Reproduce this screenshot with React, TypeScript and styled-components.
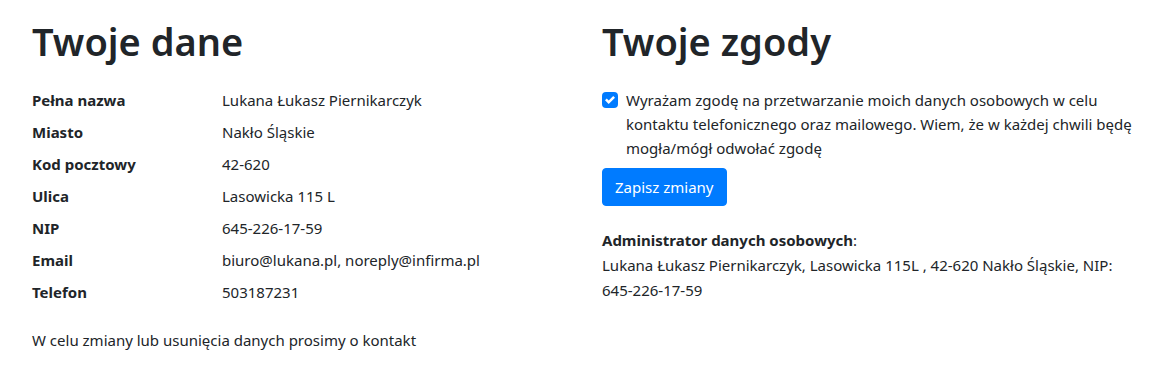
import React from "react";
import styled, { createGlobalStyle } from "styled-components";

const Global = createGlobalStyle`
  html, body { margin: 0; padding: 0; background: #fff; }
  body {
    font-family: "Noto Sans", "Open Sans", sans-serif;
    font-size: 15px;
    line-height: 24px;
    color: #212529;
  }
  * { box-sizing: border-box; }
`;

const Page = styled.div`
  display: grid;
  grid-template-columns: 570px 540px;
  padding: 17px 32px 0 32px;
`;

const Column = styled.section`
  display: flex;
  flex-direction: column;
`;

const Title = styled.h1`
  margin: 0 0 19px 0;
  font-size: 38px;
  line-height: 48px;
  font-weight: 600;
  color: #212529;
`;

const Table = styled.div`
  display: grid;
  grid-template-columns: 190px 1fr;
  grid-auto-rows: 32px;
  align-items: center;
  margin-bottom: 20px;
`;

const Label = styled.div`
  font-weight: 700;
`;

const Value = styled.div``;

const Note = styled.p`
  margin: 0;
`;

const Consent = styled.label`
  display: flex;
  gap: 8px;
  width: 540px;
  margin-top: 4px;
  align-items: flex-start;
`;

const ConsentText = styled.span`
  white-space: nowrap;
`;

const Box = styled.span`
  flex: none;
  width: 16px;
  height: 16px;
  margin-top: 4px;
  border-radius: 4px;
  background: #007bff;
  display: flex;
  align-items: center;
  justify-content: center;
`;

const Button = styled.button`
  align-self: flex-start;
  margin-top: 8px;
  padding: 6px 12px;
  font-family: inherit;
  font-size: 15px;
  line-height: 24px;
  color: #fff;
  background: #007bff;
  border: 1px solid #007bff;
  border-radius: 4px;
`;

const Admin = styled.p`
  margin: 22px 0 0 0;
  width: 520px;
  line-height: 25px;
`;

const rows: [string, string][] = [
  ["Pełna nazwa", "Lukana Łukasz Piernikarczyk"],
  ["Miasto", "Nakło Śląskie"],
  ["Kod pocztowy", "42-620"],
  ["Ulica", "Lasowicka 115 L"],
  ["NIP", "645-226-17-59"],
  ["Email", "biuro@lukana.pl, noreply@infirma.pl"],
  ["Telefon", "503187231"],
];

export default function App() {
  return (
    <>
      <Global />
      <Page>
        <Column>
          <Title>Twoje dane</Title>
          <Table>
            {rows.map(([k, v]) => (
              <React.Fragment key={k}>
                <Label>{k}</Label>
                <Value>{v}</Value>
              </React.Fragment>
            ))}
          </Table>
          <Note>W celu zmiany lub usunięcia danych prosimy o kontakt</Note>
        </Column>
        <Column>
          <Title>Twoje zgody</Title>
          <Consent>
            <Box>
              <svg width="10" height="10" viewBox="0 0 8 8">
                <path fill="#fff" d="M6.564.75l-3.59 3.612-1.538-1.55L0 4.26l2.974 2.99L8 2.193z" />
              </svg>
            </Box>
            <ConsentText>
              Wyrażam zgodę na przetwarzanie moich danych osobowych w celu
              <br />
              kontaktu telefonicznego oraz mailowego. Wiem, że w każdej chwili będę
              <br />
              mogła/mógł odwołać zgodę
            </ConsentText>
          </Consent>
          <Button>Zapisz zmiany</Button>
          <Admin>
            <b>Administrator danych osobowych</b>:<br />
            Lukana Łukasz Piernikarczyk, Lasowicka 115L , 42-620 Nakło Śląskie, NIP: 645-226-17-59
          </Admin>
        </Column>
      </Page>
    </>
  );
}
